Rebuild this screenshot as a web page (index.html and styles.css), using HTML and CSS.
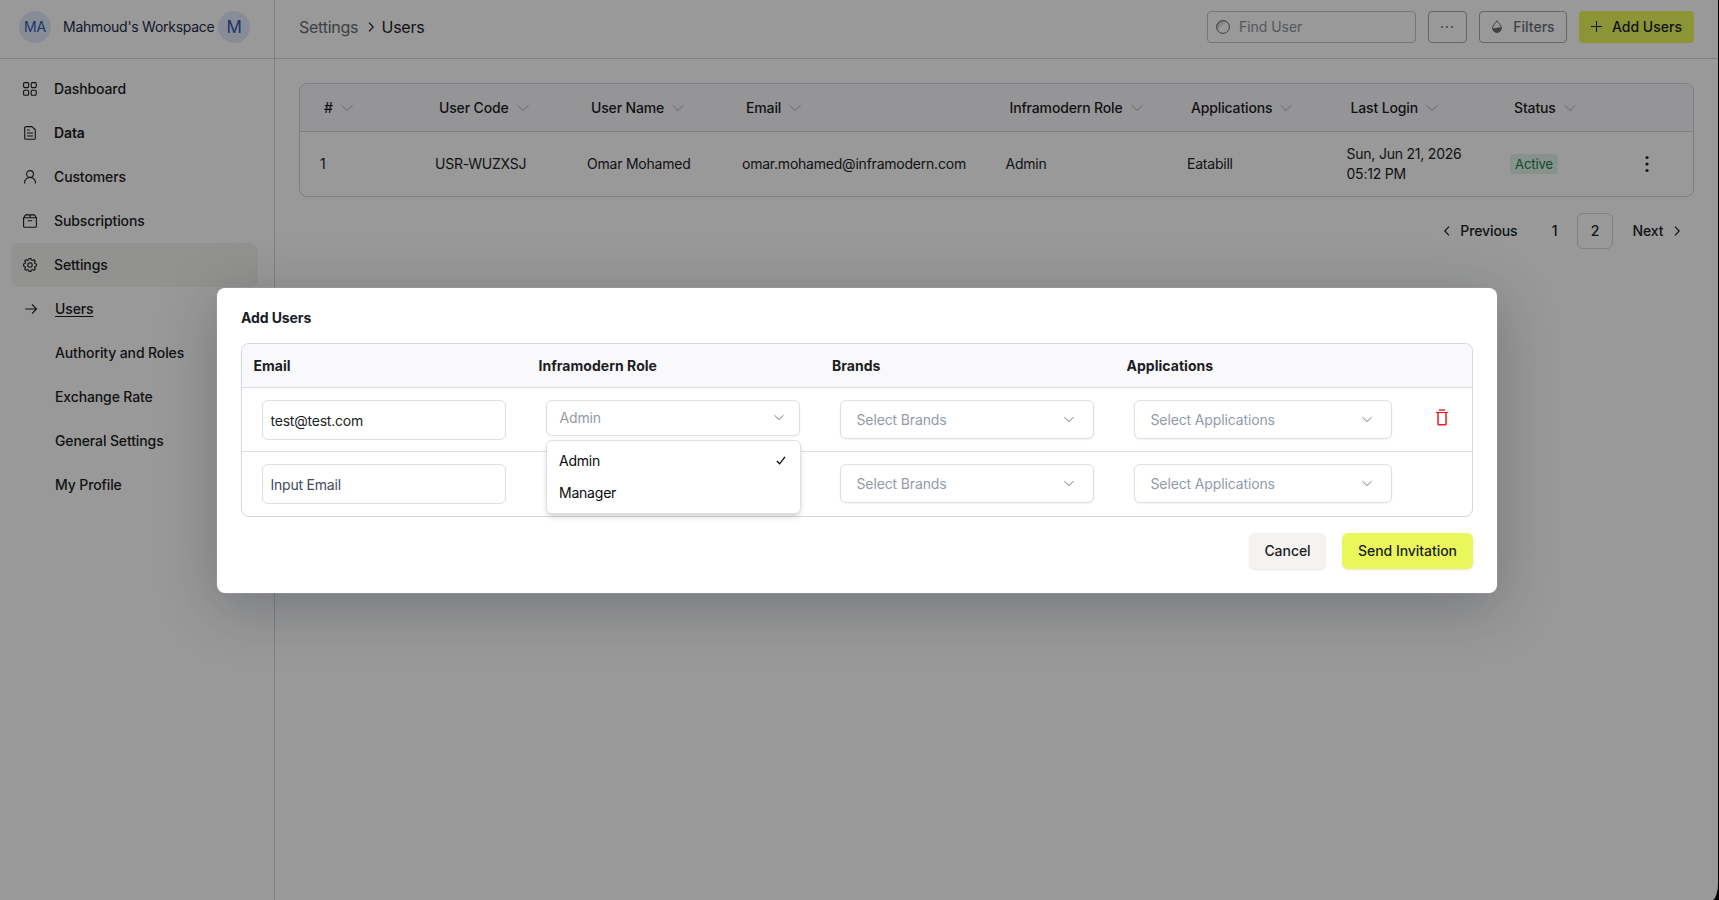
FILE: index.html
```html
<!DOCTYPE html>
<html lang="en">
<head>
  <meta charset="utf-8">
  <meta name="viewport" content="width=device-width, initial-scale=1.0">
  <title>Users</title>
  <link rel="stylesheet" href="styles.css">
</head>
<body>

<!-- shared icons -->
<svg class="sprite" width="0" height="0">
  <symbol id="chevron-down" viewBox="0 0 12 8"><path d="M.5 1.2 6 6.5l5.5-5.3"/></symbol>
  <symbol id="chevron-right" viewBox="0 0 6 10"><path d="M1 .7 5.2 5 1 9.3"/></symbol>
</svg>

<div class="app">
  <aside class="sidebar">
    <div class="workspace">
      <span class="avatar">MA</span>
      <span class="workspace-name">Mahmoud's Workspace</span>
      <span class="avatar avatar-lg">M</span>
    </div>
    <nav class="nav">
      <a class="nav-item">
        <svg class="icon" viewBox="0 0 14 14"><rect x=".6" y=".6" width="5" height="5" rx="1"/><rect x="8.2" y=".6" width="5" height="5" rx="1"/><rect x=".6" y="8.2" width="5" height="5" rx="1"/><rect x="8.2" y="8.2" width="5" height="5" rx="1"/></svg>
        Dashboard
      </a>
      <a class="nav-item strong">
        <svg class="icon" viewBox="0 0 14 14"><path d="M2.7.6h6.1l3.5 3.2v8.4a1.1 1.1 0 0 1-1.1 1.1H2.8a1.1 1.1 0 0 1-1.1-1.1V1.7A1.1 1.1 0 0 1 2.8.6zM4 4h2.8M4 7h6M4 10h6"/></svg>
        Data
      </a>
      <a class="nav-item">
        <svg class="icon" viewBox="0 0 14 14"><circle cx="7" cy="4" r="3.4"/><path d="M1.6 13.6v-1a5.4 5.2 0 0 1 10.8 0v1"/></svg>
        Customers
      </a>
      <a class="nav-item">
        <svg class="icon" viewBox="0 0 14 14"><path d="M.6 3.8h12.8v8.5a1 1 0 0 1-1 1H1.6a1 1 0 0 1-1-1zM.6 3.8 2.6.9h8.8l2 2.9M7 .9v2.9M4.8 6.8h4.4"/></svg>
        Subscriptions
      </a>
      <a class="nav-item active">
        <svg class="icon" viewBox="0 0 14 14"><circle cx="7" cy="7" r="2.2"/><path d="M5.7 1.9 6.1.4h1.8l.4 1.5 1.2.5 1.4-.8 1.4 1.4-.8 1.4.5 1.2 1.6.5v1.8l-1.6.5-.5 1.2.8 1.4-1.4 1.4-1.4-.8-1.2.5-.4 1.5H6.1l-.4-1.5-1.2-.5-1.4.8L1.7 11l.8-1.4L2 8.4.4 7.9V6.1L2 5.6l.5-1.2L1.7 3l1.4-1.4 1.4.8z"/></svg>
        Settings
      </a>
      <a class="nav-item sub current">
        <svg class="icon" viewBox="0 0 14 14"><path d="M1.3 7h11.2M8 2.4 12.5 7 8 11.6"/></svg>
        <span>Users</span>
      </a>
      <a class="nav-item sub">Authority and Roles</a>
      <a class="nav-item sub">Exchange Rate</a>
      <a class="nav-item sub">General Settings</a>
      <a class="nav-item sub">My Profile</a>
    </nav>
  </aside>

  <main class="main">
    <header class="topbar">
      <div class="breadcrumb">
        <span class="crumb">Settings</span>
        <svg class="crumb-sep"><use href="#chevron-right"/></svg>
        <span class="crumb-current">Users</span>
      </div>
      <div class="actions">
        <div class="search">
          <svg viewBox="0 0 14 14" width="14" height="14">
            <defs><linearGradient id="lens" x1="0" y1="0" x2="1" y2="1"><stop offset="0" stop-color="#aaa"/><stop offset=".5" stop-color="#fff"/></linearGradient></defs>
            <circle cx="7" cy="7" r="6.4" fill="url(#lens)" stroke="#5e626a"/>
          </svg>
          <span>Find User</span>
        </div>
        <button class="btn btn-more">
          <svg viewBox="0 0 14 4" width="14" height="4"><circle cx="2" cy="2" r="1"/><circle cx="7" cy="2" r="1"/><circle cx="12" cy="2" r="1"/></svg>
        </button>
        <button class="btn btn-filters">
          <svg viewBox="0 0 10 13" width="10" height="13"><path d="M5 .8C3 3.5.6 5.7.6 8.1a4.4 4.3 0 0 0 8.8 0C9.4 5.7 7 3.5 5 .8z" fill="none" stroke="#6b6f76"/><path d="M.8 8.5 9.2 7a4.3 4.3 0 0 1-8.4 1.5z" fill="#6b6f76"/><path d="M1 8.4h8a4 4 0 0 1-8 0z" fill="#6b6f76"/></svg>
          Filters
        </button>
        <button class="btn btn-add">
          <svg viewBox="0 0 11 11" width="11" height="11"><path d="M5.5 0v11M0 5.5h11" stroke="#1c1d1f"/></svg>
          Add Users
        </button>
      </div>
    </header>

    <section class="content">
      <div class="users-table">
        <div class="users-row users-head">
          <div># <svg><use href="#chevron-down"/></svg></div>
          <div>User Code <svg><use href="#chevron-down"/></svg></div>
          <div>User Name <svg><use href="#chevron-down"/></svg></div>
          <div>Email <svg><use href="#chevron-down"/></svg></div>
          <div>Inframodern Role <svg><use href="#chevron-down"/></svg></div>
          <div>Applications <svg><use href="#chevron-down"/></svg></div>
          <div>Last Login <svg><use href="#chevron-down"/></svg></div>
          <div>Status <svg><use href="#chevron-down"/></svg></div>
          <div></div>
        </div>
        <div class="users-row users-body">
          <div>1</div>
          <div>USR-WUZXSJ</div>
          <div>Omar Mohamed</div>
          <div>omar.mohamed@inframodern.com</div>
          <div>Admin</div>
          <div>Eatabill</div>
          <div>Sun, Jun 21, 2026<br>05:12 PM</div>
          <div><span class="badge">Active</span></div>
          <div><svg viewBox="0 0 4 18" width="4" height="18"><circle cx="2" cy="2.5" r="1.6"/><circle cx="2" cy="9" r="1.6"/><circle cx="2" cy="15.5" r="1.6"/></svg></div>
        </div>
      </div>

      <div class="pagination">
        <a class="page-step prev"><svg><use href="#chevron-right"/></svg>Previous</a>
        <a class="page">1</a>
        <a class="page selected">2</a>
        <a class="page-step next">Next<svg><use href="#chevron-right"/></svg></a>
      </div>
    </section>
  </main>
</div>

<div class="overlay">
  <div class="modal">
    <h2>Add Users</h2>
    <div class="invite-table">
      <div class="invite-row invite-head">
        <div>Email</div>
        <div>Inframodern Role</div>
        <div>Brands</div>
        <div>Applications</div>
        <div></div>
      </div>
      <div class="invite-row">
        <input class="email" type="text" value="test@test.com" placeholder="Input Email">
        <div class="role">
          <div class="select select-role"><span>Admin</span><svg><use href="#chevron-down"/></svg></div>
          <div class="menu">
            <div class="option">Admin
              <svg viewBox="0 0 10 9" width="10" height="9"><path d="M.9 5 3.6 7.8 9 .8"/></svg>
            </div>
            <div class="option">Manager</div>
          </div>
        </div>
        <div class="select"><span>Select Brands</span><svg><use href="#chevron-down"/></svg></div>
        <div class="select"><span>Select Applications</span><svg><use href="#chevron-down"/></svg></div>
        <svg class="trash" viewBox="0 0 12 17" width="12" height="17"><path d="M3 1h6" stroke-width="2" opacity=".7"/><path d="M0 3.5h12" stroke-width="1.2"/><path d="M2 3.5v11.4q0 .8.8.8h6.4q.8 0 .8-.8V3.5" stroke-width="1.5"/></svg>
      </div>
      <div class="invite-row">
        <input class="email" type="text" placeholder="Input Email">
        <div class="select select-role"><span></span><svg><use href="#chevron-down"/></svg></div>
        <div class="select"><span>Select Brands</span><svg><use href="#chevron-down"/></svg></div>
        <div class="select"><span>Select Applications</span><svg><use href="#chevron-down"/></svg></div>
        <div></div>
      </div>
    </div>
    <div class="modal-actions">
      <button class="btn-cancel">Cancel</button>
      <button class="btn-send">Send Invitation</button>
    </div>
  </div>
</div>

</body>
</html>
```
FILE: styles.css
```css
* {
  box-sizing: border-box;
}

html {
  background: #000;
}

body {
  margin: 0;
  height: 900px;
  overflow: hidden;
  font-family: Inter, "Liberation Sans", sans-serif;
  font-size: 14px;
  letter-spacing: -0.22px;
  color: #1c1d1f;
}

button, input {
  font-family: inherit;
  font-size: inherit;
  letter-spacing: inherit;
  color: inherit;
}

svg {
  flex: none;
}

.sprite {
  position: absolute;
}

.app, .overlay {
  width: 1717.5px;
  height: 900px;
  border-bottom-right-radius: 6px 18px;
}

.app {
  display: flex;
  background: #fff;
}

/* sidebar */
.sidebar {
  width: 275px;
  border-right: 1px solid #d5d6da;
}

.workspace {
  display: flex;
  align-items: center;
  height: 59px;
  padding: 0 0 5px 19px;
  border-bottom: 1px solid #d5d6da;
}

.avatar {
  display: flex;
  flex: none;
  align-items: center;
  justify-content: center;
  width: 32px;
  height: 32px;
  border-radius: 50%;
  background: #e3e9fa;
  color: #3257b5;
  font-size: 14px;
}

.avatar-lg {
  font-size: 17px;
}

.workspace-name {
  width: 155px;
  margin-left: 12px;
  color: #1d2b4b;
  font-size: 14px;
  letter-spacing: 0;
  white-space: nowrap;
  letter-spacing: -0.27px;
}

.nav {
  padding: 8px 16px 0 11px;
}

.nav-item {
  display: flex;
  align-items: center;
  gap: 17px;
  height: 44px;
  padding: 0 0 0 12px;
  border-radius: 8px;
  font-weight: 500;
  letter-spacing: -0.12px;
}

.nav-item.strong {
  font-weight: 600;
}

.nav-item.active {
  background: #f4f4f0;
}

.nav-item.sub {
  padding-left: 44px;
}

.nav-item.current {
  padding-left: 13px;
  gap: 17px;
  text-decoration: underline;
  text-underline-offset: 2px;
}

.nav-item, .nav-item.sub {
  padding-bottom: 1px;
}

.icon {
  width: 14px;
  height: 14px;
  fill: none;
  stroke: #1c1d1f;
  stroke-width: 1.1;
}

/* top bar */
.main {
  flex: 1;
}

.topbar {
  display: flex;
  align-items: center;
  justify-content: space-between;
  height: 59px;
  padding: 0 24px 5px;
  border-bottom: 1px solid #d5d6da;
}

.breadcrumb {
  display: flex;
  align-items: center;
  font-size: 16px;
}

.crumb {
  width: 69px;
  color: #686b70;
  letter-spacing: -0.25px;
}

.crumb-sep, .page-step svg {
  width: 6px;
  height: 10px;
  fill: none;
  stroke: #1c1d1f;
  stroke-width: 1.2;
}

.crumb-current {
  margin-left: 7.5px;
  letter-spacing: -0.25px;
}

.actions {
  display: flex;
  gap: 12px;
}

.search {
  display: flex;
  align-items: center;
  gap: 9px;
  width: 209px;
  height: 32px;
  padding-left: 8.5px;
  border: 1px solid #c3c5ca;
  border-radius: 4px;
  color: #8d929b;
  letter-spacing: -0.05px;
}

.btn {
  display: flex;
  align-items: center;
  justify-content: center;
  height: 32px;
  padding: 0;
  border: 1px solid #a9abb2;
  border-radius: 4px;
  background: #fff;
  font-weight: 500;
  letter-spacing: 0;
}

.btn-more {
  width: 39px;
  fill: #6b6f76;
}

.btn-filters {
  width: 88px;
  padding-left: 2px;
  gap: 11px;
  color: #6b6f76;
}

.btn-add {
  width: 115px;
  padding-left: 1px;
  gap: 10px;
  border: none;
  background: #e9f75a;
}

/* users table */
.content {
  padding: 24px 24px 0;
}

.users-table {
  border: 1px solid #d2d3dc;
  border-radius: 8px;
  overflow: hidden;
}

.users-row {
  display: grid;
  grid-template-columns: 115px 152px 155px 263.5px 181.5px 159.5px 163.5px 135px 1fr;
  align-items: center;
  padding-left: 20px;
}

.users-head {
  height: 48px;
  background: #f9f9fc;
  border-bottom: 1px solid #d2d3dc;
  font-weight: 500;
  letter-spacing: -0.15px;
}

.users-head > div {
  display: flex;
  align-items: center;
  gap: 8px;
  padding-left: 4px;
}

.users-head svg {
  width: 12px;
  height: 8px;
  fill: none;
  stroke: #a9abb0;
}

.users-body {
  height: 64px;
  line-height: 20px;
}

.users-body svg {
  display: block;
  fill: #1c1d1f;
}

.badge {
  display: inline-block;
  width: 48px;
  height: 20px;
  border-radius: 3px;
  background: #dff3e8;
  color: #1c7a52;
  font-size: 13px;
  letter-spacing: -0.1px;
  text-align: center;
}

.pagination {
  display: flex;
  align-items: center;
  justify-content: flex-end;
  margin-top: 16px;
  padding-right: 14px;
  font-weight: 500;
  letter-spacing: -0.1px;
}

.page {
  display: flex;
  align-items: center;
  justify-content: center;
  width: 36px;
  height: 36px;
  margin-right: 4.5px;
  padding-bottom: 1px;
}

.page.selected {
  border: 1px solid #d5d6da;
  border-radius: 6px;
}

.page-step {
  display: flex;
  align-items: center;
  gap: 10px;
  padding-bottom: 1px;
}

.page-step.prev {
  margin-right: 19px;
}

.page-step.prev svg {
  transform: rotate(180deg);
}

.page-step.next {
  margin-left: 15px;
}

/* add users dialog */
.overlay {
  position: absolute;
  top: 0;
  left: 0;
  background: rgba(0, 0, 0, 0.4);
  overflow: hidden;
}

.modal {
  width: 1280px;
  height: 305px;
  margin: 288px 0 0 217px;
  padding: 21px 24px 0;
  border-radius: 8px;
  background: #fff;
  box-shadow: 0 0 0 1px rgba(160, 160, 170, 0.4), 0 13px 60px rgba(20, 25, 38, 0.27);
}

.modal h2 {
  margin: 0 0 16px;
  font-size: 14px;
  line-height: 18px;
  font-weight: 700;
  letter-spacing: -0.1px;
}

.invite-table {
  border: 1px solid #d5d6df;
  border-radius: 8px;
}

.invite-row {
  display: grid;
  grid-template-columns: 244px 254px 254px 258px 12px;
  column-gap: 40px;
  align-items: start;
  height: 64px;
  padding: 12px 0 0 20px;
  border-top: 1px solid #dcdde2;
}

.invite-row:last-child {
  height: 65px;
}

.invite-head {
  grid-template-columns: 285px 293.5px 294.5px 1fr 12px;
  column-gap: 0;
  align-items: center;
  height: 43px;
  padding: 0 0 0 11.5px;
  border-top: none;
  border-radius: 8px 8px 0 0;
  background: #f9f9fc;
  font-weight: 700;
  letter-spacing: 0.03px;
}

.email {
  width: 244px;
  height: 40px;
  padding: 1px 8px 0 7.5px;
  border: 1px solid #dedee2;
  border-radius: 6px;
  background: #fff;
}

.email::placeholder {
  color: #3f4a5c;
  opacity: 1;
}

.select {
  display: flex;
  align-items: center;
  justify-content: space-between;
  height: 39px;
  padding: 0 19px 0 15.5px;
  border: 1px solid #dedfe3;
  border-radius: 6px;
  background: #fff;
  color: #929aa8;
  letter-spacing: -0.13px;
  box-shadow: 0 1px 2px rgba(0, 0, 0, 0.05);
}

.select svg {
  width: 10px;
  height: 7px;
  fill: none;
  stroke: #777b82;
  stroke-width: 1.2;
}

.select-role {
  height: 36px;
  padding: 0 15px 1px 12.5px;
}

.role {
  position: relative;
}

.menu {
  position: absolute;
  top: 40px;
  left: 0;
  width: 255px;
  height: 74px;
  padding: 3px 1px;
  border: 1px solid #dedfe3;
  border-radius: 6px;
  background: #fff;
  box-shadow: 0 4px 6px -1px rgba(0, 0, 0, 0.14), 0 2px 4px -2px rgba(0, 0, 0, 0.1);
  color: #0a0a0a;
  z-index: 1;
}

.option {
  display: flex;
  align-items: center;
  justify-content: space-between;
  height: 32px;
  padding: 0 13px 0 11px;
}

.option svg {
  fill: none;
  stroke: #0a0a0a;
  stroke-width: 1.3;
}

.trash {
  margin: 9px 0 0 4px;
  fill: none;
  stroke: #ea1f2d;
}

.modal-actions {
  display: flex;
  justify-content: flex-end;
  gap: 16px;
  margin-top: 16px;
}

.modal-actions button {
  height: 36px;
  padding: 0 0 1px;
  border: none;
  border-radius: 6px;
  font-weight: 500;
  letter-spacing: -0.05px;
  box-shadow: 0 1px 2px rgba(0, 0, 0, 0.1);
}

.modal-actions .btn-cancel {
  width: 77px;
  background: #f4f3f2;
}

.modal-actions .btn-send {
  width: 131px;
  background: #e9f75a;
}
```
